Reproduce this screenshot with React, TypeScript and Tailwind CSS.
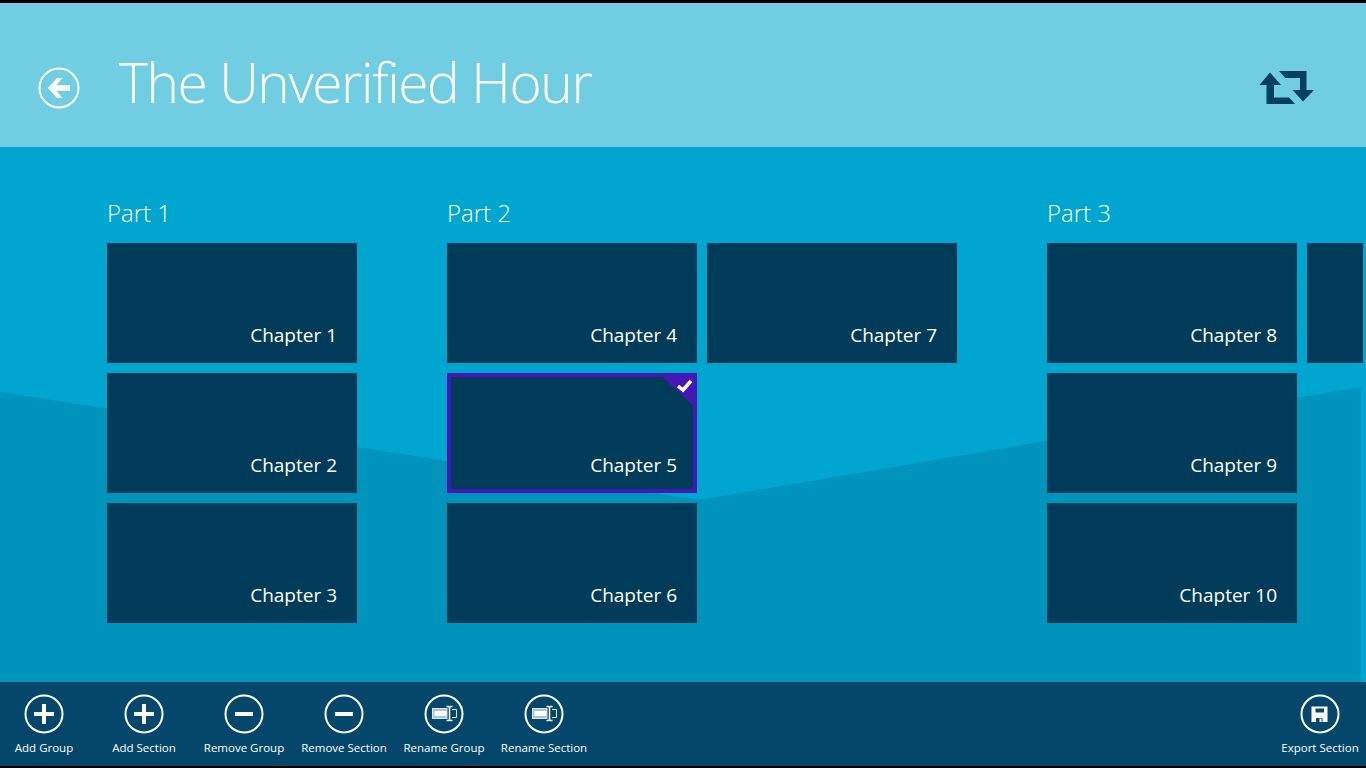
const titleFont = { fontFamily: '"Open Sans", "Noto Sans", sans-serif' };

const groups = [
  { name: 'Part 1', width: 'w-[250px]', tiles: ['Chapter 1', 'Chapter 2', 'Chapter 3'] },
  { name: 'Part 2', width: 'w-[510px]', tiles: ['Chapter 4', 'Chapter 5', 'Chapter 6', 'Chapter 7'] },
  { name: 'Part 3', width: 'w-[316px] overflow-hidden', tiles: ['Chapter 8', 'Chapter 9', 'Chapter 10', ''] },
];

const CircleIcon = ({ children }: { children: React.ReactNode }) => (
  <svg width="40" height="40" viewBox="0 0 40 40" className="block">
    <circle cx="20" cy="20" r="18.500" fill="none" stroke="#fff" strokeWidth="2" />
    {children}
  </svg>
);

const PlusIcon = () => (
  <CircleIcon>
    <path d="M18 10h4v8h8v4h-8v8h-4v-8h-8v-4h8z" fill="#fff" />
  </CircleIcon>
);

const MinusIcon = () => (
  <CircleIcon>
    <rect x="11" y="18" width="18" height="4" fill="#fff" />
  </CircleIcon>
);

const RenameIcon = () => (
  <CircleIcon>
    <rect x="8.500" y="14.500" width="14.500" height="10" fill="#a9c4d3" stroke="#dbe7ee" />
    <rect x="10.500" y="17" width="12" height="5" fill="#fff" />
    <path d="M28 15.500h4.500v8H28" fill="none" stroke="#dbe7ee" />
    <path
      d="M22.500 12.500h2l1 1 1-1h2M25.500 13.500v12M22.500 26.500h2l1-1 1 1h2"
      fill="none"
      stroke="#fff"
      strokeWidth="1.500"
    />
  </CircleIcon>
);

const SaveIcon = () => (
  <CircleIcon>
    <path
      fillRule="evenodd"
      d="M11.500 12.500h16v15.500h-16zM15.500 14.500v4h8.500v-4zM16 24v4h6.500v-4zM19.500 24.500h2v3.500h-2z"
      fill="#fff"
    />
  </CircleIcon>
);

const actions = [
  { label: 'Add Group', icon: <PlusIcon /> },
  { label: 'Add Section', icon: <PlusIcon /> },
  { label: 'Remove Group', icon: <MinusIcon /> },
  { label: 'Remove Section', icon: <MinusIcon /> },
  { label: 'Rename Group', icon: <RenameIcon /> },
  { label: 'Rename Section', icon: <RenameIcon /> },
];

const ActionButton = ({ label, icon, width }: { label: string; icon: React.ReactNode; width: string }) => (
  <div className={`flex flex-col items-center ${width}`}>
    {icon}
    <span className="mt-[6px] text-[11.500px] leading-[16px] text-white whitespace-nowrap">{label}</span>
  </div>
);

const Tile = ({ label }: { label: string }) => {
  const selected = label === 'Chapter 5';
  return (
    <div
      className={`relative w-[250px] h-[120px] bg-[#003b5a] flex items-end justify-end ${
        selected ? 'border-4 border-[#4617b4] pr-[16px] pb-[10px]' : 'pr-[20px] pb-[14px]'
      }`}
    >
      <span className="text-[19px] leading-[28px] text-white">{label}</span>
      {selected && (
        <svg width="40" height="36" viewBox="0 0 40 36" className="absolute -top-[4px] -right-[4px]">
          <path d="M1 0h39v36z" fill="#4617b4" />
          <path d="M21 13l5 4 8-9" fill="none" stroke="#fff" strokeWidth="3.500" />
        </svg>
      )}
    </div>
  );
};

export default function App() {
  return (
    <div className="relative w-[1366px] h-[768px] overflow-hidden flex flex-col bg-black" style={titleFont}>
      <div className="mt-[3px] h-[144px] shrink-0 bg-[#70cde2] flex items-start relative z-10">
        <svg width="42" height="44" viewBox="0 0 42 44" className="ml-[38px] mt-[63px] shrink-0">
          <circle cx="21" cy="22" r="19.500" fill="none" stroke="#fff" strokeWidth="2" />
          <path d="M10 22l9-10h5.500l-6 7.300H32v5.400H18.500l6 7.300H19z" fill="#fff" />
        </svg>
        <h1 className="ml-[39px] mt-[43px] text-[55px] leading-[72px] tracking-[-1.400px] font-light text-white whitespace-nowrap">
          The Unverified Hour
        </h1>
        <svg width="56" height="34" viewBox="1259 71 56 34" className="absolute left-[1259px] top-[68px]">
          <path
            d="M1270 72.500L1281 85h-7v12.500h15l6 6.500h-28.500V85h-7zM1279 71h27.500v19h7.500l-11 11.600L1292.500 90h7.500V78h-14.500z"
            fill="#03405f"
          />
        </svg>
      </div>

      <div className="relative flex-1 bg-[#00a6cf] overflow-hidden">
        <svg width="1361" height="535" viewBox="0 0 1361 535" className="absolute left-0 top-0">
          <path d="M0 245L700 353 1361 240V535H0z" fill="#0093bc" />
        </svg>
        <div className="relative flex gap-[90px] pl-[107px] pt-[50px]">
          {groups.map((group) => (
            <div key={group.name} className={`${group.width} shrink-0`}>
              <h2 className="text-[24px] leading-[32px] font-light text-white mb-[14px]">{group.name}</h2>
              <div className="grid grid-rows-[120px_120px_120px] grid-flow-col auto-cols-[250px] gap-[10px]">
                {group.tiles.map((tile, i) =>
                  tile ? <Tile key={tile} label={tile} /> : <div key={i} className="w-[250px] h-[120px] bg-[#003b5a]" />,
                )}
              </div>
            </div>
          ))}
        </div>
      </div>

      <div className="h-[84px] shrink-0 mb-[2px] bg-[#04476b] flex justify-between pt-[12px] relative">
        <div className="flex -ml-[6px]">
          {actions.map((action) => (
            <ActionButton key={action.label} label={action.label} icon={action.icon} width="w-[100px]" />
          ))}
        </div>
        <ActionButton label="Export Section" icon={<SaveIcon />} width="w-[92px]" />
      </div>
    </div>
  );
}
